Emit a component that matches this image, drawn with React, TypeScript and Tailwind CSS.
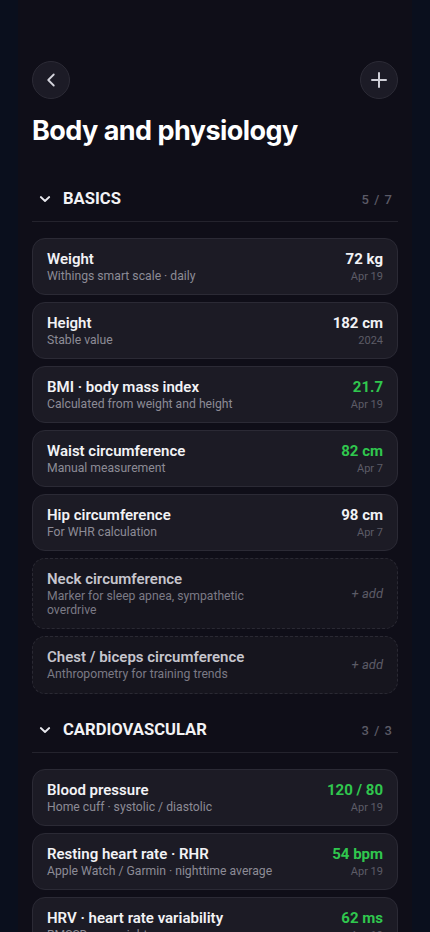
import React from "react";

type Item = {
  title: string;
  sub: string;
  value?: string;
  date?: string;
  green?: boolean;
};

const basics: Item[] = [
  { title: "Weight", sub: "Withings smart scale · daily", value: "72 kg", date: "Apr 19" },
  { title: "Height", sub: "Stable value", value: "182 cm", date: "2024" },
  { title: "BMI · body mass index", sub: "Calculated from weight and height", value: "21.7", date: "Apr 19", green: true },
  { title: "Waist circumference", sub: "Manual measurement", value: "82 cm", date: "Apr 7", green: true },
  { title: "Hip circumference", sub: "For WHR calculation", value: "98 cm", date: "Apr 7" },
  { title: "Neck circumference", sub: "Marker for sleep apnea, sympathetic overdrive" },
  { title: "Chest / biceps circumference", sub: "Anthropometry for training trends" },
];

const cardio: Item[] = [
  { title: "Blood pressure", sub: "Home cuff · systolic / diastolic", value: "120 / 80", date: "Apr 19", green: true },
  { title: "Resting heart rate · RHR", sub: "Apple Watch / Garmin · nighttime average", value: "54 bpm", date: "Apr 19", green: true },
  { title: "HRV · heart rate variability", sub: "RMSSD · overnight average", value: "62 ms", date: "Apr 19", green: true },
];

function Card({ item }: { item: Item }) {
  const empty = !item.value;
  return (
    <div
      className={
        empty
          ? "flex items-center justify-between rounded-[13px] border border-dashed border-[#2a2933] bg-[#16151e] px-[14px] py-[11px]"
          : "flex items-center justify-between rounded-[13px] border border-[#2b2a35] bg-[#1c1b25] px-[14px] py-[11px]"
      }
    >
      <div className="flex max-w-[244px] flex-col">
        <div
          className={
            empty
              ? "text-[15px] leading-[18px] font-semibold text-[#c6c5cd]"
              : "text-[15px] leading-[18px] font-semibold text-[#f2f2f5]"
          }
        >
          {item.title}
        </div>
        <div
          className={
            empty
              ? "mt-[2px] text-[12.2px] leading-[13.5px] text-[#7b7a85]"
              : "mt-[2px] text-[12.2px] leading-[13px] text-[#8c8b96]"
          }
        >
          {item.sub}
        </div>
      </div>
      {empty ? (
        <div className="text-[13px] italic text-[#5c5b66]">+ add</div>
      ) : (
        <div className="flex flex-col items-end">
          <div
            className={
              item.green
                ? "text-[15px] leading-[18px] font-bold text-[#30c74e]"
                : "text-[15px] leading-[18px] font-bold text-[#f2f2f5]"
            }
          >
            {item.value}
          </div>
          <div className="mt-[2px] text-[11px] leading-[13px] text-[#5d5c67]">{item.date}</div>
        </div>
      )}
    </div>
  );
}

function Section({ name, count, items, first }: { name: string; count: string; items: Item[]; first?: boolean }) {
  return (
    <div className={first ? "mt-[40px]" : "mt-[24px]"}>
      <div className="flex items-baseline justify-between border-b border-[#24232d] pb-[10px] pl-[6px] pr-[5px]">
        <div className="flex items-baseline gap-[11px]">
          <svg width="14" height="14" viewBox="0 0 14 14" fill="none" className="self-center">
            <path d="M2.8 5 L7 9 L11.2 5" stroke="#e8e8ee" strokeWidth="1.8" strokeLinecap="round" strokeLinejoin="round" />
          </svg>
          <span className="text-[16.6px] leading-[24px] font-bold text-[#f2f2f5]">{name}</span>
        </div>
        <span className="text-[13px] font-medium tracking-[0.08em] text-[#5b5a66]">{count}</span>
      </div>
      <div className="mt-[16px] flex flex-col gap-[7px]">
        {items.map((it) => (
          <Card key={it.title} item={it} />
        ))}
      </div>
    </div>
  );
}

export default function App() {
  return (
    <div className="min-h-screen bg-[#0a0f1d]" style={{ fontFamily: "Roboto, 'Noto Sans', sans-serif" }}>
      <div className="mx-auto min-h-screen w-[394px] bg-[#0f0e18] px-[14px] pb-10 pt-[61px]">
        <div className="flex items-center justify-between">
          <button className="flex h-[38px] w-[38px] items-center justify-center rounded-full border border-[#2c2b36] bg-[#1c1b26] text-[#d4d4dc]">
            <svg width="22" height="22" viewBox="0 0 24 24" fill="none" stroke="currentColor" strokeWidth="2" strokeLinecap="round" strokeLinejoin="round">
              <path d="m15 18-6-6 6-6" />
            </svg>
          </button>
          <button className="flex h-[38px] w-[38px] items-center justify-center rounded-full border border-[#2c2b36] bg-[#1c1b26] text-[#cfcfd7]">
            <svg width="24" height="24" viewBox="0 0 24 24" fill="none" stroke="currentColor" strokeWidth="2" strokeLinecap="round">
              <path d="M5 12h14" />
              <path d="M12 5v14" />
            </svg>
          </button>
        </div>
        <h1 className="mt-[16px] text-[27px] leading-[32px] font-bold tracking-[-0.02em] text-white" style={{ fontFamily: "Inter, sans-serif" }}>Body and physiology</h1>
        <Section name="BASICS" count="5 / 7" items={basics} first />
        <Section name="CARDIOVASCULAR" count="3 / 3" items={cardio} />
      </div>
    </div>
  );
}
